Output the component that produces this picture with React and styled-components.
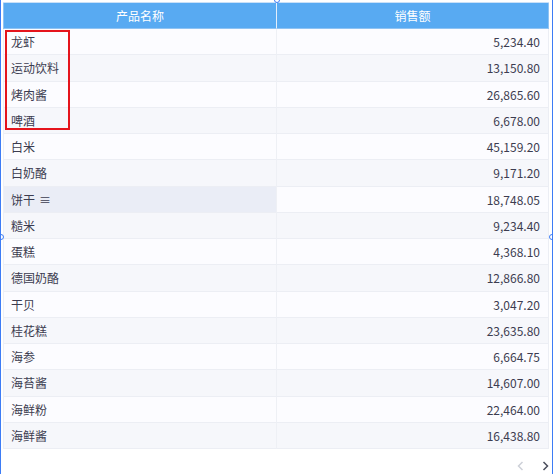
import React from "react";
import styled, { createGlobalStyle } from "styled-components";

const GlobalStyle = createGlobalStyle`
  html, body {
    margin: 0;
    padding: 0;
    background: #ffffff;
    font-family: "Noto Sans CJK SC", "Noto Sans", "Liberation Sans", sans-serif;
  }
`;

const rows = [
  ["龙虾", "5,234.40"],
  ["运动饮料", "13,150.80"],
  ["烤肉酱", "26,865.60"],
  ["啤酒", "6,678.00"],
  ["白米", "45,159.20"],
  ["白奶酪", "9,171.20"],
  ["饼干", "18,748.05"],
  ["糙米", "9,234.40"],
  ["蛋糕", "4,368.10"],
  ["德国奶酪", "12,866.80"],
  ["干贝", "3,047.20"],
  ["桂花糕", "23,635.80"],
  ["海参", "6,664.75"],
  ["海苔酱", "14,607.00"],
  ["海鲜粉", "22,464.00"],
  ["海鲜酱", "16,438.80"],
];

const Frame = styled.div`
  position: relative;
  width: 553px;
  height: 474px;
  box-sizing: border-box;
  border-left: 1px solid #3d7cf5;
  border-right: 1px solid #3d7cf5;
  padding: 2px 3px 0 2px;
  display: flex;
  flex-direction: column;
  overflow: hidden;
`;

const Handle = styled.span`
  position: absolute;
  width: 6px;
  height: 6px;
  border-radius: 50%;
  background: #fff;
  border: 1px solid #3d7cf5;
  box-sizing: border-box;
  left: ${(p) => p.$x};
  top: ${(p) => p.$y};
  transform: translate(-50%, -50%);
`;

const Table = styled.div`
  display: grid;
  grid-template-columns: 274px 1fr;
  border-top: 1px solid #c9e0f8;
`;

const HeadCell = styled.div`
  height: 25px;
  background: #58aaf2;
  color: #ffffff;
  font-size: 12px;
  display: flex;
  align-items: center;
  justify-content: center;
  border-bottom: 1px solid #8fc3f3;
  border-left: ${(p) => (p.$first ? "1px solid #8fc3f3" : "none")};
  border-right: 1px solid ${(p) => (p.$first ? "#e3eefb" : "#8fc3f3")};
`;

const Cell = styled.div`
  height: 25.25px;
  box-sizing: content-box;
  display: flex;
  align-items: center;
  justify-content: ${(p) => (p.$right ? "flex-end" : "flex-start")};
  padding: ${(p) => (p.$right ? "0 8px 0 0" : "0 0 0 7px")};
  font-size: 12px;
  color: #3c3c50;
  background: ${(p) => (p.$hover ? "#eaedf6" : p.$odd ? "#f6f7fb" : "#fcfcff")};
  border-bottom: 1px solid #eceef4;
  border-right: 1px solid ${(p) => (p.$right ? "#eceef4" : "#eef0f5")};
  border-left: ${(p) => (p.$right ? "none" : "1px solid #eef0f5")};
`;

const MenuIcon = styled.span`
  margin-left: 4px;
  font-size: 12px;
  color: #3c3c50;
`;

const Highlight = styled.div`
  position: absolute;
  left: 4px;
  top: 30px;
  width: 61px;
  height: 96px;
  border: 2px solid #e5141c;
`;

const Pager = styled.div`
  margin-top: auto;
  height: 14px;
  padding-bottom: 1px;
  display: flex;
  justify-content: flex-end;
  align-items: center;
  gap: 18px;
  padding-right: 0;
`;

const Arrow = styled.svg`
  width: 7px;
  height: 10px;
  stroke: ${(p) => (p.$disabled ? "#cdd0d8" : "#4a4d5c")};
  stroke-width: 1.5;
  fill: none;
`;

export default function App() {
  return (
    <>
      <GlobalStyle />
      <Frame>
        <Table>
          <HeadCell $first>产品名称</HeadCell>
          <HeadCell>销售额</HeadCell>
          {rows.map(([name, value], i) => (
            <React.Fragment key={name}>
              <Cell $odd={i % 2 === 1} $hover={name === "饼干"}>
                {name}
                {name === "饼干" && <MenuIcon>≡</MenuIcon>}
              </Cell>
              <Cell $odd={i % 2 === 1} $right>
                {value}
              </Cell>
            </React.Fragment>
          ))}
        </Table>
        <Pager>
          <Arrow $disabled viewBox="0 0 7 10">
            <path d="M5.5 1 L1.5 5 L5.5 9" />
          </Arrow>
          <Arrow viewBox="0 0 7 10">
            <path d="M1.5 1 L5.5 5 L1.5 9" />
          </Arrow>
        </Pager>
        <Highlight />
        <Handle $x="276px" $y="0px" />
        <Handle $x="0px" $y="237px" />
        <Handle $x="551px" $y="237px" />
      </Frame>
    </>
  );
}
